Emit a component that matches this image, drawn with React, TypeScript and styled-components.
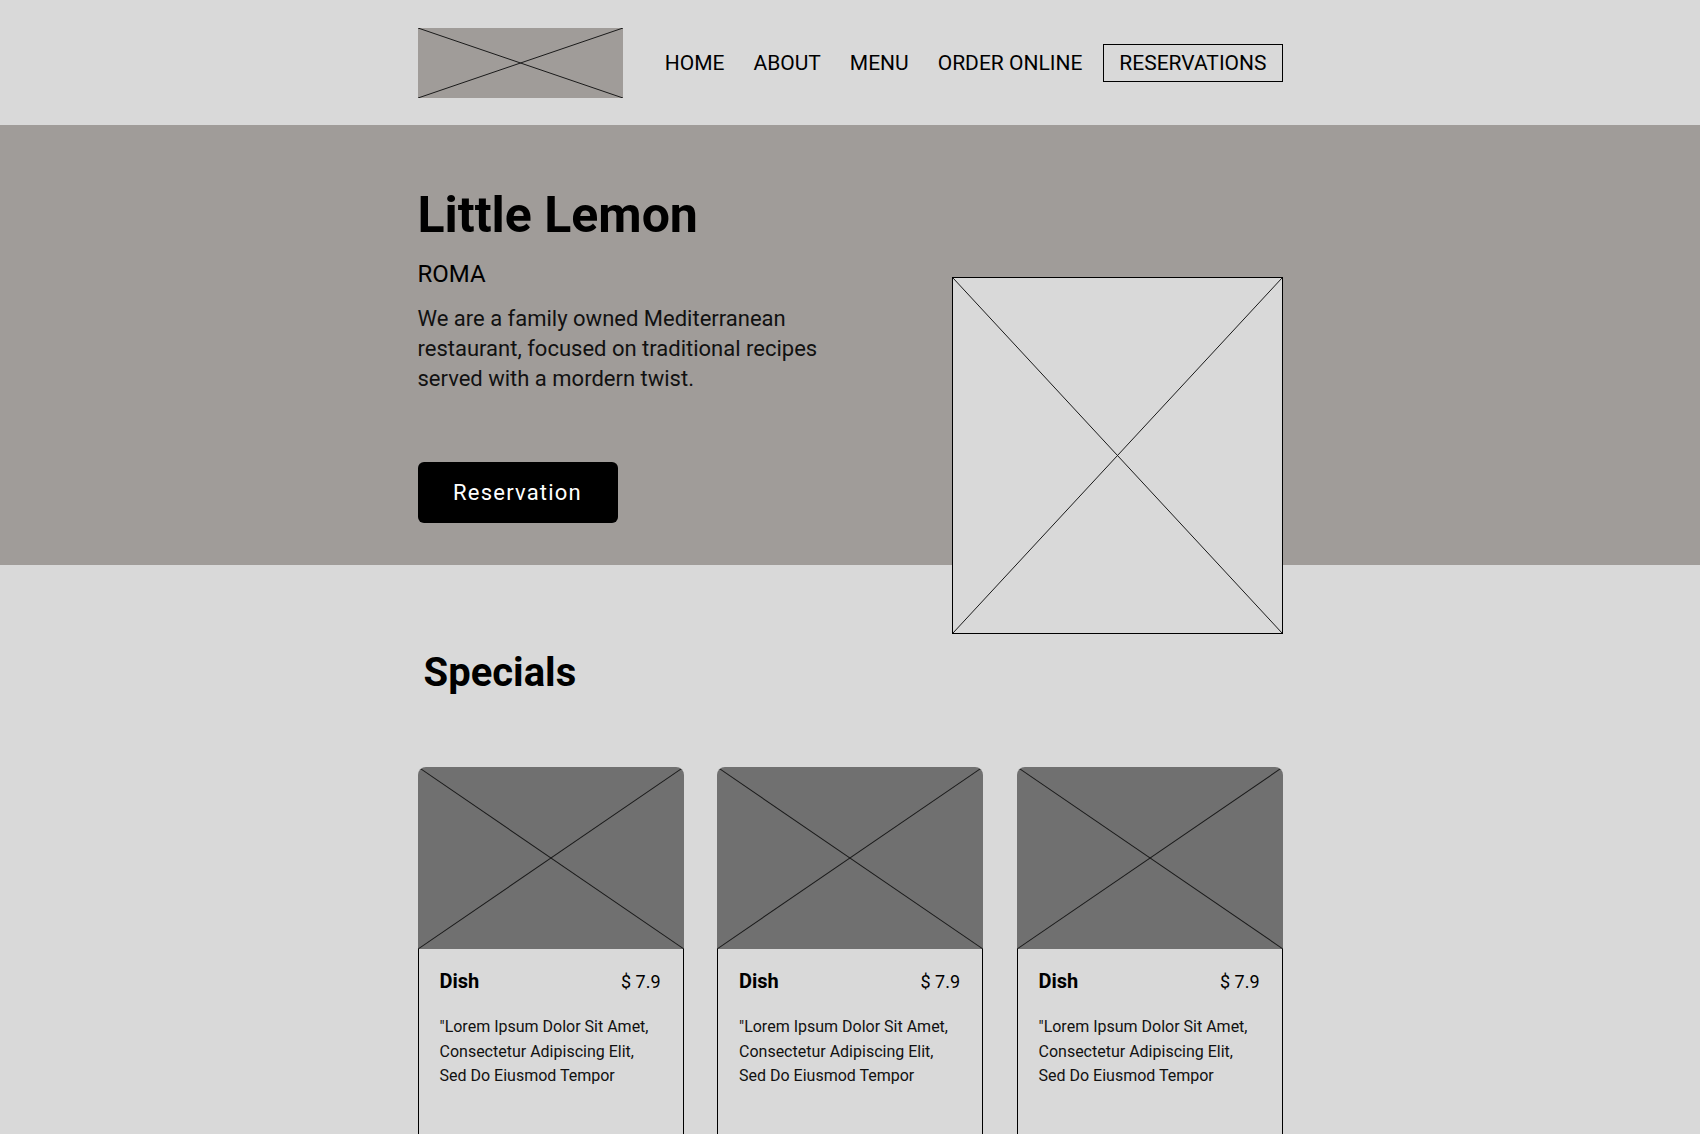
import React from "react";
import styled, { createGlobalStyle } from "styled-components";

const Global = createGlobalStyle`
  * { box-sizing: border-box; }
  html, body { margin: 0; padding: 0; background: #d9d9d9; }
  body { font-family: Roboto, "Liberation Sans", Arial, sans-serif; color: #000; }
`;

const Page = styled.div`
  background: #d9d9d9;
  min-height: 1134px;
  overflow: hidden;
`;

const Container = styled.div`
  width: 865px;
  margin: 0 auto;
`;

const HeaderBar = styled.header`
  height: 125px;
  background: #d9d9d9;
`;

const HeaderInner = styled(Container)`
  height: 100%;
  display: flex;
  align-items: center;
  justify-content: space-between;
`;

const Placeholder = styled.div<{ $w: string; $h: string; $bg: string; $border?: boolean; $radius?: string }>`
  width: ${(p) => p.$w};
  height: ${(p) => p.$h};
  background: ${(p) => p.$bg};
  border: ${(p) => (p.$border ? "1px solid #000" : "none")};
  border-radius: ${(p) => p.$radius || "0"};
  overflow: hidden;
  flex-shrink: 0;
  svg { display: block; width: 100%; height: 100%; }
`;

const Cross = () => (
  <svg viewBox="0 0 100 100" preserveAspectRatio="none">
    <line x1="0" y1="0" x2="100" y2="100" stroke="#1a1a1a" strokeWidth="1" vectorEffect="non-scaling-stroke" />
    <line x1="100" y1="0" x2="0" y2="100" stroke="#1a1a1a" strokeWidth="1" vectorEffect="non-scaling-stroke" />
  </svg>
);

const Nav = styled.nav`
  display: flex;
  align-items: center;
  gap: 13px;
`;

const NavLink = styled.a<{ $boxed?: boolean }>`
  font-size: 21px;
  line-height: 36px;
  color: #000;
  text-decoration: none;
  padding: 0 ${(p) => (p.$boxed ? "15px" : "8px")};
  border: ${(p) => (p.$boxed ? "1px solid #000" : "none")};
  white-space: nowrap;
`;

const Hero = styled.section`
  height: 440px;
  background: #a09c99;
`;

const HeroInner = styled(Container)`
  display: flex;
  justify-content: space-between;
  align-items: flex-start;
`;

const HeroText = styled.div`
  width: 430px;
  padding-top: 60px;
  display: flex;
  flex-direction: column;
  align-items: flex-start;
`;

const Title = styled.h1`
  margin: 0;
  font-size: 50px;
  line-height: 60px;
  font-weight: 700;
`;

const City = styled.h2`
  margin: 15px 0 0;
  font-size: 24px;
  line-height: 28px;
  font-weight: 400;
`;

const Lead = styled.p`
  margin: 16px 0 0;
  font-size: 22px;
  line-height: 30px;
  color: #111;
`;

const PrimaryButton = styled.button`
  margin-top: 68px;
  width: 200px;
  height: 61px;
  background: #000;
  color: #fff;
  border: none;
  border-radius: 6px;
  font-family: inherit;
  font-size: 22px;
  letter-spacing: 1.2px;
`;

const HeroMedia = styled.div`
  padding-top: 152px;
`;

const Main = styled(Container)`
  padding-top: 84px;
`;

const SectionTitle = styled.h2`
  margin: 0 0 0 6px;
  font-size: 40px;
  line-height: 48px;
  font-weight: 700;
`;

const Cards = styled.div`
  margin-top: 70px;
  display: grid;
  grid-template-columns: repeat(3, 266px);
  justify-content: space-between;
`;

const Card = styled.article`
  display: flex;
  flex-direction: column;
`;

const CardBody = styled.div`
  border: 1px solid #000;
  border-top: none;
  padding: 20px 22px 0 21px;
  min-height: 260px;
`;

const CardHead = styled.div`
  display: flex;
  justify-content: space-between;
  align-items: baseline;
`;

const Dish = styled.span`
  font-size: 20px;
  line-height: 24px;
  font-weight: 700;
`;

const Price = styled.span`
  font-size: 18px;
  line-height: 24px;
`;

const Desc = styled.p`
  margin: 21px 0 0;
  font-size: 16px;
  line-height: 24.5px;
  color: #111;
`;

const navItems = ["HOME", "ABOUT", "MENU", "ORDER ONLINE"];

export default function App() {
  return (
    <Page>
      <Global />
      <HeaderBar>
        <HeaderInner>
          <Placeholder $w="205px" $h="70px" $bg="#a09c99">
            <Cross />
          </Placeholder>
          <Nav>
            {navItems.map((n) => (
              <NavLink key={n}>{n}</NavLink>
            ))}
            <NavLink $boxed>RESERVATIONS</NavLink>
          </Nav>
        </HeaderInner>
      </HeaderBar>
      <Hero>
        <HeroInner>
          <HeroText>
            <Title>Little Lemon</Title>
            <City>ROMA</City>
            <Lead>
              We are a family owned Mediterranean restaurant, focused on traditional recipes served with a mordern twist.
            </Lead>
            <PrimaryButton>Reservation</PrimaryButton>
          </HeroText>
          <HeroMedia>
            <Placeholder $w="331px" $h="357px" $bg="#d9d9d9" $border>
              <Cross />
            </Placeholder>
          </HeroMedia>
        </HeroInner>
      </Hero>
      <Main>
        <SectionTitle>Specials</SectionTitle>
        <Cards>
          {[0, 1, 2].map((i) => (
            <Card key={i}>
              <Placeholder $w="100%" $h="182px" $bg="#707070" $radius="8px 8px 0 0">
                <Cross />
              </Placeholder>
              <CardBody>
                <CardHead>
                  <Dish>Dish</Dish>
                  <Price>$ 7.9</Price>
                </CardHead>
                <Desc>
                  "Lorem Ipsum Dolor Sit Amet,
                  <br />
                  Consectetur Adipiscing Elit,
                  <br />
                  Sed Do Eiusmod Tempor
                </Desc>
              </CardBody>
            </Card>
          ))}
        </Cards>
      </Main>
    </Page>
  );
}
